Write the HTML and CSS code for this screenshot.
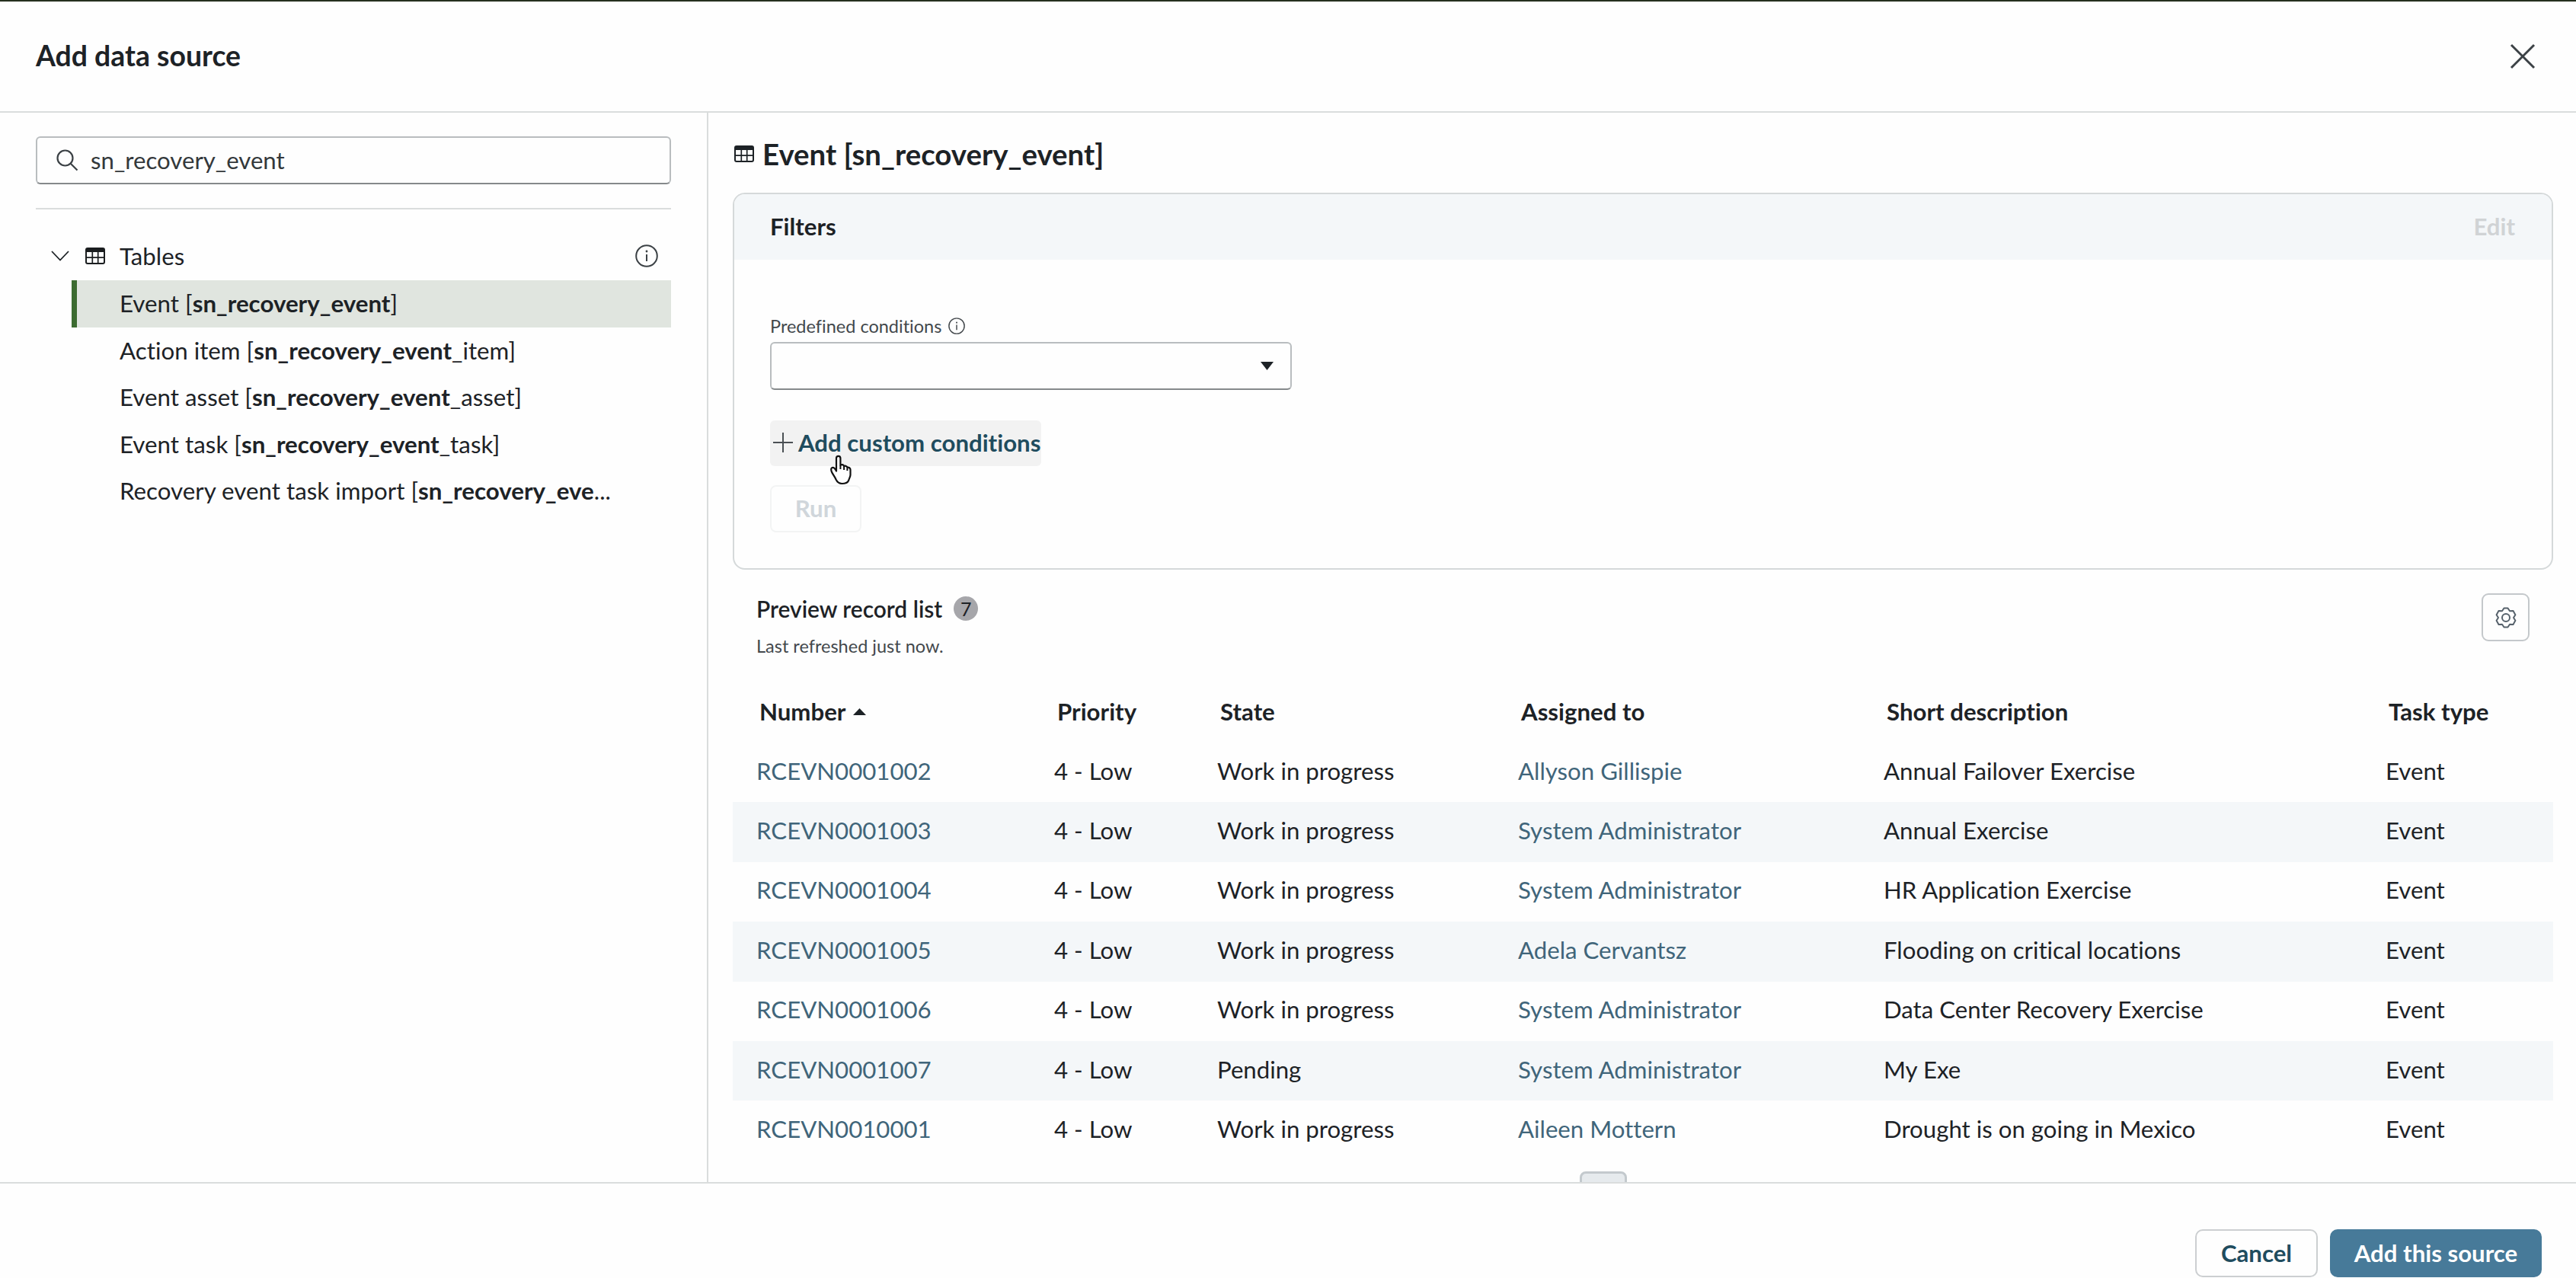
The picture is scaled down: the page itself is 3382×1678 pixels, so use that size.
FILE: index.html
```html
<!DOCTYPE html>
<html lang="en">
<head>
    <meta charset="UTF-8">
    <meta name="viewport" content="width=device-width, initial-scale=1.0">
    <title>Add data source</title>
    <link rel="stylesheet" href="styles.css">
</head>
<body>

    <svg class="sprite">
        <symbol id="icon-table" viewBox="0 0 26 22">
            <rect x="1" y="1" width="24" height="20" rx="2" fill="none" stroke="currentColor" stroke-width="2"/>
            <path d="M1 1h24v5H1z" fill="currentColor"/>
            <path d="M9.3 6v15M16.7 6v15M1 13.2h24" fill="none" stroke="currentColor" stroke-width="1.7"/>
        </symbol>
        <symbol id="icon-info" viewBox="0 0 30 30">
            <circle cx="15" cy="15" r="13.8" fill="none" stroke="currentColor" stroke-width="2"/>
            <path d="M15 13v9" stroke="currentColor" stroke-width="2"/>
            <circle cx="15" cy="9" r="1.4" fill="currentColor"/>
        </symbol>
    </svg>

    <div class="modal">
        <header class="modal-header">
            <h1>Add data source</h1>
            <button class="close-btn" aria-label="Close">
                <svg width="34" height="34" viewBox="0 0 34 34"><path d="M2 2l30 30M32 2L2 32" fill="none" stroke="currentColor" stroke-width="3"/></svg>
            </button>
        </header>

        <div class="modal-body">
            <aside class="sidebar">
                <div class="search">
                    <svg width="29" height="29" viewBox="0 0 29 29"><circle cx="11.5" cy="11.5" r="10" fill="none" stroke="currentColor" stroke-width="2.2"/><path d="M18.5 18.5l9 9" stroke="currentColor" stroke-width="2.2"/></svg>
                    <input type="text" value="sn_recovery_event">
                </div>

                <div class="tree">
                    <div class="tree-head">
                        <svg class="chevron" width="24" height="14" viewBox="0 0 24 14"><path d="M1 1l11 11.5L23 1" fill="none" stroke="currentColor" stroke-width="1.8"/></svg>
                        <svg class="table-icon" width="26" height="22"><use href="#icon-table"/></svg>
                        <span>Tables</span>
                        <svg class="info" width="30" height="30"><use href="#icon-info"/></svg>
                    </div>
                    <ul>
                        <li class="selected">Event [<b>sn_recovery_event</b>]</li>
                        <li>Action item [<b>sn_recovery_event</b>_item]</li>
                        <li>Event asset [<b>sn_recovery_event</b>_asset]</li>
                        <li>Event task [<b>sn_recovery_event</b>_task]</li>
                        <li>Recovery event task import [<b>sn_recovery_eve</b>...</li>
                    </ul>
                </div>
            </aside>

            <main class="content">
                <h2 class="source-title">
                    <svg width="26" height="22"><use href="#icon-table"/></svg>
                    <span>Event [sn_recovery_event]</span>
                </h2>

                <section class="filters">
                    <div class="filters-head">
                        <h3>Filters</h3>
                        <span class="edit">Edit</span>
                    </div>
                    <div class="filters-body">
                        <label class="small">Predefined conditions <svg width="22" height="22"><use href="#icon-info"/></svg></label>
                        <div class="select">
                            <svg width="17" height="11" viewBox="0 0 17 11"><path d="M0 0h17L8.5 11z" fill="currentColor"/></svg>
                        </div>
                        <button class="add-condition">
                            <svg width="26" height="26" viewBox="0 0 26 26"><path d="M13 0v26M0 13h26" stroke="#4a5054" stroke-width="2"/></svg>
                            <span>Add custom conditions</span>
                            <svg class="pointer" width="30" height="40" viewBox="0 0 30 40">
                                <path d="M9 20V4.5a2.7 2.7 0 0 1 5.4 0V14c1.500-1.600 4.300-1 4.700 1.200 1.600-1 3.900-.3 4.300 1.700 2-.7 4.100.6 4.100 2.800v6.800c0 2.500-1.700 4.500-2.400 7.500-1.500 3.200-4.500 4-8.600 4-4.500 0-6.300-2-8-5.500-1.500-3.500-4-6.500-5.500-9.700-1-2.600-1.200-5 .5-5.700 2-.8 3.700.9 5.500 4.400z" fill="#fff" stroke="#111" stroke-width="2.2" stroke-linejoin="round"/>
                                <path d="M14.4 14v5M19.1 15.5v4.500M23.4 17.5v3.500" stroke="#111" stroke-width="2"/>
                            </svg>
                        </button>
                        <button class="run-btn">Run</button>
                    </div>
                </section>

                <section class="preview">
                    <div class="preview-head">
                        <div>
                            <h3>Preview record list <span class="count">7</span></h3>
                            <p class="small">Last refreshed just now.</p>
                        </div>
                        <button class="gear-btn" aria-label="Settings">
                            <svg width="28" height="28" viewBox="0 0 28 28"><path d="M11.500 1.500h5L19 5.300l4.500-.2 2.900 5.100L24 14l2.400 3.800-2.900 5.100-4.500-.2-2.500 3.800h-5L9 22.700l-4.500.2-2.900-5.100L4 14l-2.400-3.800 2.900-5.100 4.500.2z" fill="none" stroke="currentColor" stroke-width="2" stroke-linejoin="round"/><circle cx="14" cy="14" r="5" fill="none" stroke="currentColor" stroke-width="2"/></svg>
                        </button>
                    </div>

                    <table>
                        <colgroup>
                            <col class="c-number"><col class="c-priority"><col class="c-state"><col class="c-assigned"><col class="c-desc"><col>
                        </colgroup>
                        <thead>
                            <tr>
                                <th>Number <svg width="17" height="9" viewBox="0 0 17 9"><path d="M0 9h17L8.500 0z" fill="currentColor"/></svg></th>
                                <th>Priority</th>
                                <th>State</th>
                                <th>Assigned to</th>
                                <th>Short description</th>
                                <th>Task type</th>
                            </tr>
                        </thead>
                        <tbody>
                            <tr><td><a>RCEVN0001002</a></td><td>4 - Low</td><td>Work in progress</td><td><a>Allyson Gillispie</a></td><td>Annual Failover Exercise</td><td>Event</td></tr>
                            <tr><td><a>RCEVN0001003</a></td><td>4 - Low</td><td>Work in progress</td><td><a>System Administrator</a></td><td>Annual Exercise</td><td>Event</td></tr>
                            <tr><td><a>RCEVN0001004</a></td><td>4 - Low</td><td>Work in progress</td><td><a>System Administrator</a></td><td>HR Application Exercise</td><td>Event</td></tr>
                            <tr><td><a>RCEVN0001005</a></td><td>4 - Low</td><td>Work in progress</td><td><a>Adela Cervantsz</a></td><td>Flooding on critical locations</td><td>Event</td></tr>
                            <tr><td><a>RCEVN0001006</a></td><td>4 - Low</td><td>Work in progress</td><td><a>System Administrator</a></td><td>Data Center Recovery Exercise</td><td>Event</td></tr>
                            <tr><td><a>RCEVN0001007</a></td><td>4 - Low</td><td>Pending</td><td><a>System Administrator</a></td><td>My Exe</td><td>Event</td></tr>
                            <tr><td><a>RCEVN0010001</a></td><td>4 - Low</td><td>Work in progress</td><td><a>Aileen Mottern</a></td><td>Drought is on going in Mexico</td><td>Event</td></tr>
                        </tbody>
                    </table>
                    <div class="pager"></div>
                </section>
            </main>
        </div>

        <footer class="modal-footer">
            <button class="btn">Cancel</button>
            <button class="btn primary">Add this source</button>
        </footer>
    </div>

</body>
</html>
```

FILE: styles.css
```css
* {
    box-sizing: border-box;
}
body {
    margin: 0;
    font-family: Lato, "Open Sans", sans-serif;
    font-size: 31.2px;
    line-height: 40px;
    font-variant-ligatures: no-common-ligatures;
    color: #1d2226;
    background-color: #fefefe;
}
h1, h2, h3, p, ul {
    margin: 0;
    padding: 0;
}
button {
    font: inherit;
    font-variant-ligatures: inherit;
    color: inherit;
    background: none;
    border: none;
    padding: 0;
}
svg {
    display: block;
    flex: none;
}
.sprite {
    display: none;
}
.small {
    font-size: 23.5px;
    line-height: 30px;
    color: #43484c;
}
.modal {
    height: 1678px;
    display: flex;
    flex-direction: column;
    border-top: 2px solid #25301f;
    overflow: hidden;
}

/* header */
.modal-header {
    height: 146px;
    flex: none;
    display: flex;
    align-items: center;
    justify-content: space-between;
    padding: 0 53px 0 47px;
    border-bottom: 2px solid #dadddd;
}
h1 {
    margin-bottom: 2px;
    font-size: 37.4px;
    font-weight: 700;
}
.close-btn {
    color: #3b4145;
}
.modal-body {
    height: 1404px;
    flex: none;
    display: flex;
    overflow: hidden;
}

/* sidebar */
.sidebar {
    width: 930px;
    flex: none;
    padding: 31px 47px 0 47px;
    border-right: 2px solid #dadddd;
}
.search {
    height: 63px;
    display: flex;
    align-items: center;
    gap: 16px;
    padding: 0 0 1px 25px;
    border: 2px solid #b9bdbf;
    border-bottom-color: #85898b;
    border-radius: 6px;
    color: #3b4145;
}
.search input {
    flex: 1;
    border: none;
    outline: none;
    background: none;
    padding: 0;
    font: inherit;
    color: #33383b;
}
.tree {
    margin-top: 31px;
    padding-top: 29px;
    border-top: 2px solid #dadddd;
}
.tree-head {
    height: 63px;
    display: flex;
    align-items: center;
    padding: 0 17px 0 20px;
}
.tree-head .table-icon {
    margin: 0 19px 0 21px;
    color: #1a1d1f;
}
.tree-head .info {
    margin-left: auto;
    color: #3b4145;
}
.tree ul {
    list-style: none;
    margin: 1px 0 0 47px;
    font-size: 31.3px;
}
.tree li {
    height: 61.5px;
    line-height: 61px;
    padding-left: 63px;
    white-space: nowrap;
}
.tree li.selected {
    padding-left: 56px;
    border-left: 7px solid #3c6b30;
    background-color: #e0e5df;
}

/* content */
.content {
    flex: 1;
    padding: 32px 30px 0 32px;
}
.source-title {
    height: 46px;
    display: flex;
    align-items: center;
    gap: 11px;
    padding-bottom: 2px;
    font-size: 38.4px;
    font-weight: 700;
}
.source-title svg {
    margin-left: 2px;
}
h3 {
    font-size: 31.2px;
    font-weight: 700;
}
.filters {
    height: 495px;
    margin-top: 27px;
    border: 2px solid #d5d9da;
    border-radius: 16px;
    overflow: hidden;
}
.filters-head {
    height: 86px;
    display: flex;
    align-items: center;
    justify-content: space-between;
    padding: 0 48px 2px 47px;
    background-color: #f4f7f9;
}
.edit {
    font-weight: 700;
    color: #d0d3d5;
}
.filters-body {
    padding: 72px 47px 0;
}
.filters-body label {
    display: flex;
    align-items: center;
    gap: 9px;
}
.select {
    width: 685px;
    height: 63px;
    margin-top: 6px;
    padding-right: 22px;
    display: flex;
    align-items: center;
    justify-content: flex-end;
    border: 2px solid #b9bdbf;
    border-bottom-color: #85898b;
    border-radius: 6px;
}
.add-condition {
    position: relative;
    height: 60px;
    margin-top: 40px;
    padding: 0 1px 2px 4px;
    display: flex;
    align-items: center;
    gap: 7px;
    font-weight: 700;
    color: #1f4c5e;
    background-color: #f2f2f2;
    border-radius: 6px;
}
.pointer {
    position: absolute;
    left: 78px;
    top: 45px;
}
.run-btn {
    display: block;
    width: 120px;
    height: 62px;
    margin-top: 25px;
    padding-bottom: 2px;
    border: 2px solid #f3f4f4;
    border-radius: 8px;
    font-weight: 700;
    color: #d0d6db;
}

/* record list */
.preview-head {
    height: 127px;
    display: flex;
    justify-content: space-between;
    padding: 31px 31px 0 31px;
}
.preview-head h3 {
    display: flex;
    align-items: center;
    gap: 15px;
    font-size: 29.9px;
    font-weight: 600;
}
.preview-head p {
    margin-top: 14px;
}
.count {
    width: 32px;
    height: 32px;
    border-radius: 50%;
    background-color: #a6a6aa;
    font-size: 25px;
    font-weight: 400;
    line-height: 32px;
    text-align: center;
}
.gear-btn {
    width: 63px;
    height: 63px;
    display: flex;
    align-items: center;
    justify-content: center;
    border: 2px solid #c4c8cb;
    border-radius: 9px;
    color: #56616b;
}
table {
    width: 100%;
    table-layout: fixed;
    border-collapse: collapse;
}
.c-number {
    width: 391px;
}
.c-priority {
    width: 214px;
}
.c-state {
    width: 395px;
}
.c-assigned {
    width: 480px;
}
.c-desc {
    width: 659px;
}
th, td {
    text-align: left;
    vertical-align: middle;
    white-space: nowrap;
    padding: 0 0 5px 31px;
}
th {
    height: 100px;
    padding: 17px 0 0 35px;
    font-weight: 700;
}
th svg {
    display: inline-block;
    margin-left: 3px;
    vertical-align: 7px;
}
td {
    height: 78.4px;
}
tbody tr:nth-child(even) {
    background-color: #f4f7f9;
}
td a {
    color: #40657a;
}
.pager {
    width: 62px;
    height: 62px;
    margin: 14px auto 0 1112px;
    border: 3px solid #c3c9cd;
    border-radius: 8px;
    background-color: #e6eaed;
}

/* footer */
.modal-footer {
    flex: 1;
    display: flex;
    align-items: flex-start;
    justify-content: flex-end;
    gap: 16px;
    padding: 60px 45px 0 0;
    border-top: 2px solid #dadddd;
    background-color: #fefefe;
}
.btn {
    width: 161px;
    height: 63px;
    padding-bottom: 2px;
    border: 2px solid #cccfd1;
    border-radius: 10px;
    font-weight: 700;
    color: #1f4c5e;
}
.btn.primary {
    width: 278px;
    border-color: #477a99;
    background-color: #477a99;
    color: #fff;
}
```
